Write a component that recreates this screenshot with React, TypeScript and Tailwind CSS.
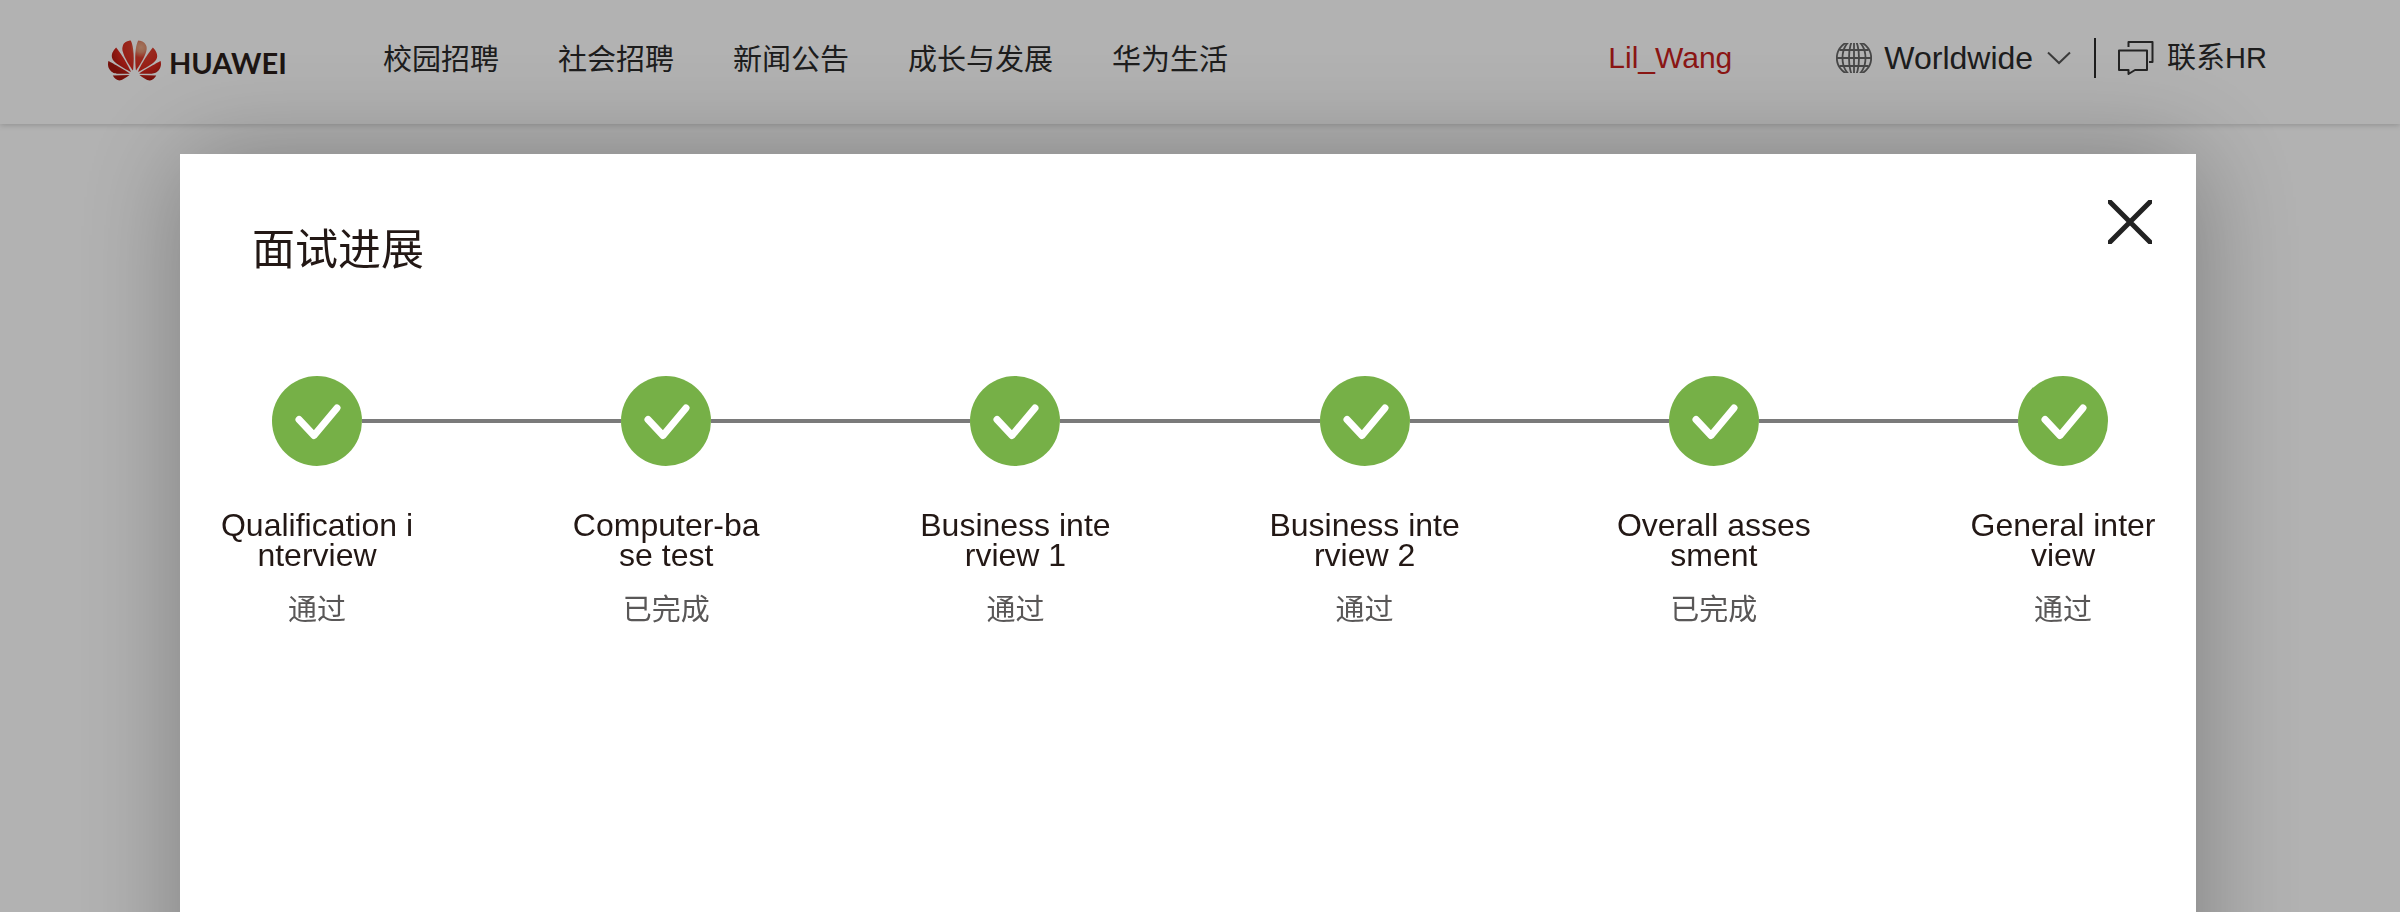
import React from "react";
import { SiHuawei } from "react-icons/si";

const navItems = ["校园招聘", "社会招聘", "新闻公告", "成长与发展", "华为生活"];

const steps = [
  { lines: ["Qualification i", "nterview"], status: "通过" },
  { lines: ["Computer-ba", "se test"], status: "已完成" },
  { lines: ["Business inte", "rview 1"], status: "通过" },
  { lines: ["Business inte", "rview 2"], status: "通过" },
  { lines: ["Overall asses", "sment"], status: "已完成" },
  { lines: ["General inter", "view"], status: "通过" },
];

function Logo() {
  return (
    <a href="#" className="flex w-[180px] items-center gap-2 pt-2">
      <svg width="0" height="0" className="absolute" aria-hidden="true">
        <defs>
          <radialGradient id="petal" gradientUnits="userSpaceOnUse" cx="15" cy="6" r="15">
            <stop offset="0" stopColor="#e8a888" />
            <stop offset="0.15" stopColor="#e09070" />
            <stop offset="0.32" stopColor="#dc3c2c" />
            <stop offset="0.7" stopColor="#d8261c" />
            <stop offset="1" stopColor="#a8180f" />
          </radialGradient>
        </defs>
      </svg>
      <SiHuawei size={53} fill="url(#petal)" className="shrink-0" aria-hidden="true" />
      <span className="pt-1 font-[Lato,sans-serif] text-[29px] leading-8 font-bold text-[#2a1e1a]">HUAWEI</span>
    </a>
  );
}

function GlobeIcon() {
  return (
    <svg width="36" height="30" viewBox="0 0 36 30" fill="none" stroke="#666" strokeWidth="1.8" aria-hidden="true">
      <circle cx="18" cy="15" r="17.2" />
      <ellipse cx="18" cy="15" rx="11.5" ry="18" />
      <ellipse cx="18" cy="15" rx="5" ry="18" />
      <path d="M18 0V30M1 15H35M3.500 7H32.500M3.500 23H32.500" />
    </svg>
  );
}

function ChatIcon() {
  return (
    <svg width="36" height="34" viewBox="0 0 36 34" fill="none" stroke="#343434" strokeWidth="2" strokeLinejoin="round" aria-hidden="true">
      <path d="M10.500 6V1H34.500V21H31" />
      <path d="M1 9.500H29V29H17L10.500 33V29H1Z" />
    </svg>
  );
}

function Header() {
  return (
    <header className="flex h-[124px] items-start justify-between bg-white pr-[133px] pl-[108px] text-[29px] leading-[40px] text-[#2a2a2a] shadow-[0_1px_6px_rgba(0,0,0,0.2)]">
      <div className="flex items-center pt-[26px]">
        <Logo />
        <nav className="ml-[95px] flex gap-[59px]">
          {navItems.map((item) => (
            <a key={item} href="#" className="whitespace-nowrap">
              {item}
            </a>
          ))}
        </nav>
      </div>
      <div className="flex items-center pt-[38px] font-['Liberation_Sans','Noto_Sans_CJK_SC',sans-serif]">
        <a href="#" className="mr-[104px] text-[30px] text-[#c7201c]">
          Lil_Wang
        </a>
        <button type="button" className="flex items-center">
          <GlobeIcon />
          <span className="ml-3 text-[32px]">Worldwide</span>
          <svg className="ml-[14px]" width="24" height="14" viewBox="0 0 24 14" fill="none" stroke="#555" strokeWidth="2" aria-hidden="true">
            <path d="M1 1.500L12 12L23 1.500" />
          </svg>
        </button>
        <span className="mr-[22px] ml-[23px] h-10 w-[2px] bg-[#2a2a2a]" />
        <a href="#" className="flex items-center gap-[13px]">
          <ChatIcon />
          <span>联系HR</span>
        </a>
      </div>
    </header>
  );
}

function CheckMark() {
  return (
    <svg className="shrink-0" width="90" height="90" viewBox="0 0 90 90" aria-hidden="true">
      <circle cx="45" cy="45" r="45" fill="#76b047" />
      <path d="M27 43.500L42 59.500L65 32" fill="none" stroke="#fff" strokeWidth="7" strokeLinecap="round" strokeLinejoin="round" />
    </svg>
  );
}

function Progress() {
  return (
    <ol className="mt-[100px] flex pr-[33px] pl-[37px]">
      {steps.map((step, index) => (
        <li key={index} className="min-w-0 flex-1 last:w-[200px] last:flex-none">
          <div className="-mr-[55px] flex items-center pl-[55px]">
            <CheckMark />
            {index < steps.length - 1 && <span className="h-1 flex-1 bg-[#7a7a7a]" />}
          </div>
          <div className="mt-[44px] w-[200px] text-center">
            <p className="font-['Liberation_Sans',sans-serif] text-[32px] leading-[30px] text-[#231815]">
              {step.lines[0]}
              <br />
              {step.lines[1]}
            </p>
            <p className="mt-[17px] text-[29px] leading-[40px] text-[#595757]">{step.status}</p>
          </div>
        </li>
      ))}
    </ol>
  );
}

export default function App() {
  return (
    <div className="min-h-screen bg-white font-['Noto_Sans_CJK_SC',sans-serif]">
      <Header />
      <div className="fixed inset-0 overflow-hidden bg-black/30 pt-[154px] pr-[204px] pl-[180px]">
        <section
          role="dialog"
          aria-modal="true"
          aria-labelledby="dialog-title"
          className="h-screen bg-white shadow-[2px_2px_100px_rgba(0,0,0,0.3)]"
        >
          <div className="flex items-start justify-between pr-[44px] pl-[72px]">
            <h1 id="dialog-title" className="pt-[62px] text-[43px] leading-[60px] text-[#231815]">
              面试进展
            </h1>
            <button type="button" aria-label="关闭" className="mt-[46px]">
              <svg width="44" height="44" viewBox="0 0 44 44" fill="none" stroke="#222" strokeWidth="5" aria-hidden="true">
                <path d="M0 0L44 44M44 0L0 44" />
              </svg>
            </button>
          </div>
          <Progress />
        </section>
      </div>
    </div>
  );
}
